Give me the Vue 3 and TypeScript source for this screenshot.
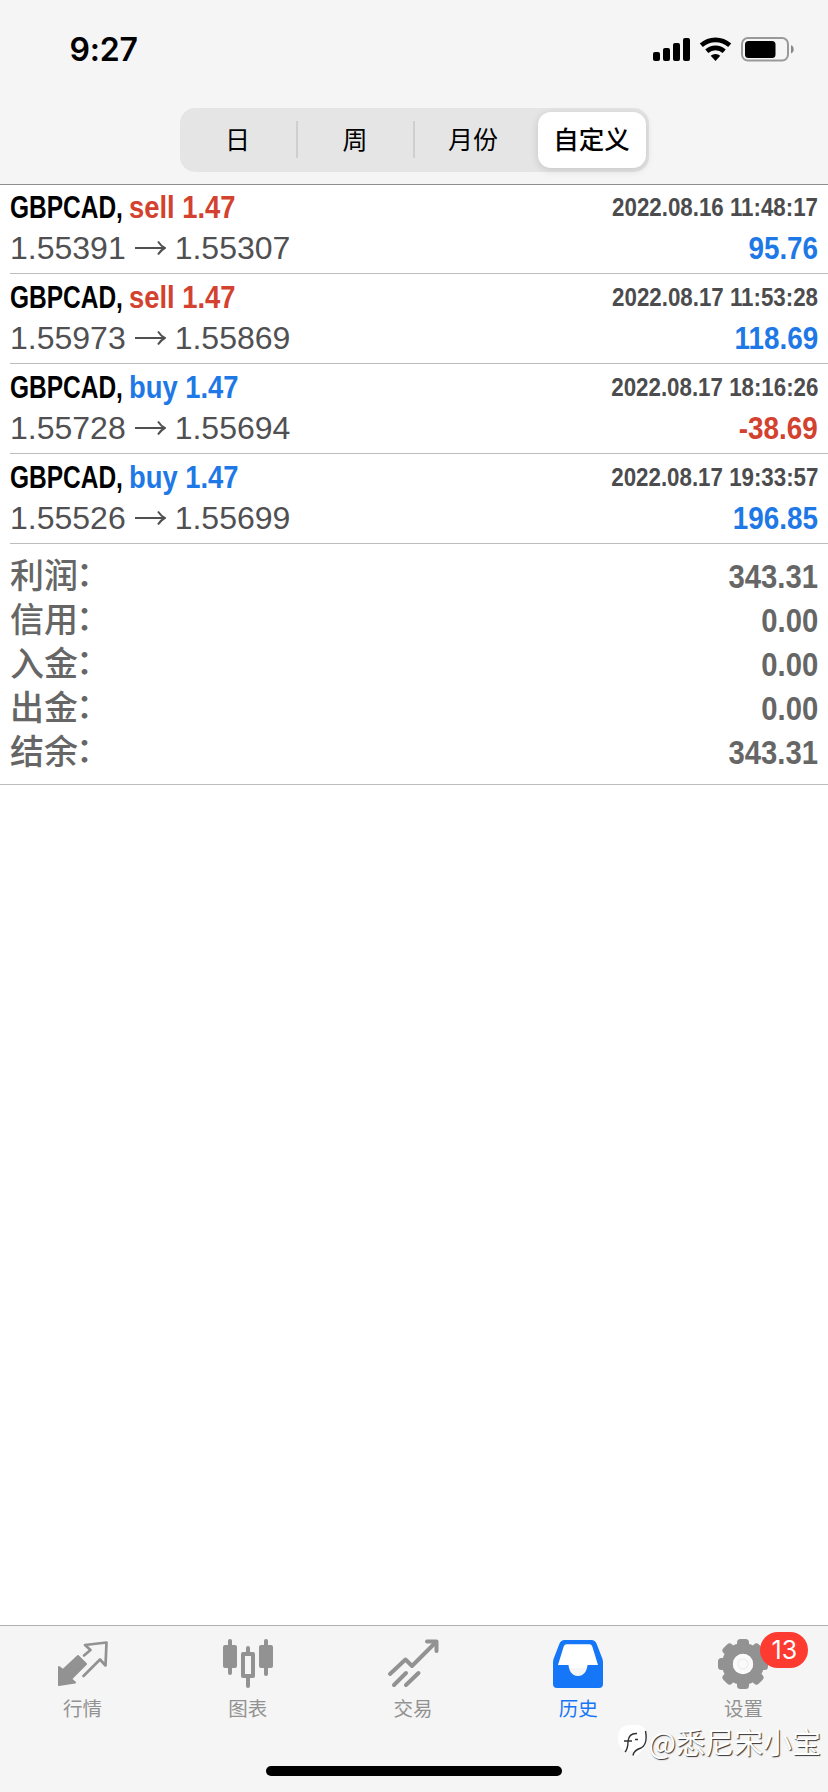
<script setup lang="ts">
type Side = 'buy' | 'sell'

interface Deal {
  symbol: string
  side: Side
  volume: string
  open: string
  close: string
  time: string
  profit: string
}

interface SummaryLine {
  label: string
  value: string
}

interface Tab {
  id: string
  label: string
  badge?: number
}

const ranges: string[] = ['日', '周', '月份', '自定义']
const activeRange = 3

const deals: Deal[] = [
  { symbol: 'GBPCAD', side: 'sell', volume: '1.47', open: '1.55391', close: '1.55307', time: '2022.08.16 11:48:17', profit: '95.76' },
  { symbol: 'GBPCAD', side: 'sell', volume: '1.47', open: '1.55973', close: '1.55869', time: '2022.08.17 11:53:28', profit: '118.69' },
  { symbol: 'GBPCAD', side: 'buy', volume: '1.47', open: '1.55728', close: '1.55694', time: '2022.08.17 18:16:26', profit: '-38.69' },
  { symbol: 'GBPCAD', side: 'buy', volume: '1.47', open: '1.55526', close: '1.55699', time: '2022.08.17 19:33:57', profit: '196.85' },
]

const summary: SummaryLine[] = [
  { label: '利润', value: '343.31' },
  { label: '信用', value: '0.00' },
  { label: '入金', value: '0.00' },
  { label: '出金', value: '0.00' },
  { label: '结余', value: '343.31' },
]

const tabs: Tab[] = [
  { id: 'quotes', label: '行情' },
  { id: 'charts', label: '图表' },
  { id: 'trade', label: '交易' },
  { id: 'history', label: '历史' },
  { id: 'settings', label: '设置', badge: 13 },
]
const activeTab = 'history'

const gearTeeth: number[] = Array.from({ length: 8 }, (_, i) => i * 45)
</script>

<template>
  <div class="screen">
    <header class="top">
      <div class="status">
        <span class="clock">9:27</span>
        <svg class="indicators" width="146" height="28" viewBox="0 0 146 28">
          <rect x="1" y="16" width="7" height="9" rx="2" />
          <rect x="11" y="12" width="7" height="13" rx="2" />
          <rect x="21" y="7" width="7" height="18" rx="2" />
          <rect x="31" y="2" width="7" height="23" rx="2" />
          <g fill="none" stroke="#000" stroke-width="4.6">
            <path d="M49.3 9.3a21.3 21.3 0 0 1 28.4 0" />
            <path d="M54.8 15.2a13 13 0 0 1 17.4 0" />
          </g>
          <path d="M58.7 19.8a7.2 7.2 0 0 1 9.6 0L63.5 25z" />
          <rect x="90" y="2" width="46" height="22.6" rx="6" fill="none" stroke="#999" stroke-width="2" />
          <rect x="93" y="5" width="30.5" height="17" rx="3.5" />
          <path d="M139 9.3c3.6 1 3.6 7.200 0 8.200z" fill="#888" />
        </svg>
      </div>
      <nav class="segments">
        <button
          v-for="(r, i) in ranges"
          :key="r"
          type="button"
          class="segment"
          :class="{ active: i === activeRange }"
        >{{ r }}</button>
      </nav>
    </header>

    <main class="content">
      <article v-for="d in deals" :key="d.time" class="deal">
        <div class="line first">
          <span class="title">
            <span class="symbol">{{ d.symbol }},</span>
            <span class="side" :class="d.side">{{ d.side }} {{ d.volume }}</span>
          </span>
          <span class="time">{{ d.time }}</span>
        </div>
        <div class="line second">
          <span class="prices">
            <span>{{ d.open }}</span>
            <svg class="arrow" width="31" height="16" viewBox="0 0 31 16">
              <path d="M0 8H29.500M23 1.500Q26 6 29.800 8Q26 10 23 14.500" />
            </svg>
            <span>{{ d.close }}</span>
          </span>
          <span class="profit" :class="{ loss: d.profit.startsWith('-') }">{{ d.profit }}</span>
        </div>
      </article>

      <section class="summary">
        <div v-for="s in summary" :key="s.label" class="sum">
          <span class="sum-label">{{ s.label }}<span class="colon">：</span></span>
          <span class="sum-value">{{ s.value }}</span>
        </div>
      </section>
    </main>

    <footer class="tabbar">
      <div class="tabs">
        <a v-for="t in tabs" :key="t.id" class="tab" :class="{ active: t.id === activeTab }">
          <span class="icon-box">
            <svg class="icon" width="52" height="52" viewBox="0 0 52 52">
              <template v-if="t.id === 'quotes'">
                <path fill="currentColor" stroke="currentColor" stroke-width="2" stroke-linejoin="round" d="M2 47V29L6 32L21 18L29 26L14 41L18 44.500Z" />
                <path fill="none" stroke="currentColor" stroke-width="2.700" stroke-linejoin="round" stroke-linecap="round" d="M27 17.500L33.500 12L28 7L49.500 4.500L48.500 27.500L43 21.500L26.500 38" />
              </template>
              <g v-else-if="t.id === 'charts'" fill="currentColor">
                <rect x="1" y="7" width="14" height="23" rx="2" />
                <rect x="6" y="1" width="4" height="36" rx="2" />
                <rect x="37" y="7" width="14" height="23" rx="2" />
                <rect x="42" y="1" width="4" height="37" rx="2" />
                <rect x="24" y="8" width="4" height="9" rx="2" />
                <rect x="24" y="38" width="4" height="12" rx="2" />
                <path fill-rule="evenodd" d="M21 14h10a2 2 0 0 1 2 2v22a2 2 0 0 1-2 2H21a2 2 0 0 1-2-2V16a2 2 0 0 1 2-2zm2 4v18h6V18z" />
              </g>
              <g v-else-if="t.id === 'trade'" fill="none" stroke="currentColor" stroke-width="4" stroke-linecap="round" stroke-linejoin="round">
                <path d="M3 36L18.500 21.500L25 28L49 4" />
                <path d="M40 3.500H49.500V13" />
                <path d="M7 47L19 35M19 47L31.500 35" />
              </g>
              <template v-else-if="t.id === 'history'">
                <path fill="#fff" d="M12 5H40L48 30H4Z" />
                <path fill="currentColor" fill-rule="evenodd" d="M12.500 2H39.500Q43 2 44.500 5.500L50.500 21Q51 23 51 25V46Q51 50 47 50H5Q1 50 1 46V25Q1 23 1.500 21L7.500 5.500Q9 2 12.500 2ZM14.500 6.300Q12.500 6.300 11.700 8.500L6 27H16.500C17 32 19.500 38 26 38S35 32 35.500 27H46L40.300 8.500Q39.500 6.300 37.500 6.300Z" />
              </template>
              <g v-else fill="currentColor">
                <rect v-for="a in gearTeeth" :key="a" x="20" y="1" width="12" height="12" rx="3.500" :transform="`rotate(${a} 26 26)`" />
                <circle cx="26" cy="26" r="15.500" fill="none" stroke="currentColor" stroke-width="11" />
                <circle cx="26" cy="26" r="10.200" fill="#fafafa" />
                <circle cx="26" cy="26" r="5" fill="none" stroke="#efefef" stroke-width="1.500" />
              </g>
            </svg>
            <span v-if="t.badge" class="badge">{{ t.badge }}</span>
          </span>
          <span class="tab-label">{{ t.label }}</span>
        </a>
      </div>
      <div class="home-bar"></div>
      <div class="watermark">
        <svg width="31" height="34" viewBox="0 0 31 34">
          <path d="M10 1H21Q30 2 30 14Q30 26 16 33L17 27H9Q1 25 1 14Q1 3 10 1Z" fill="#fff" />
          <path d="M28.500 7Q31 20 24 24Q17 26 16 31.500" fill="none" stroke="#333" stroke-width="1.400" />
          <path d="M8 28Q11 25 11 17M7 17H15M11 17Q12 9 20 9.500M18 15.500H21" fill="none" stroke="#333" stroke-width="1.400" />
        </svg>
        <span>@悉尼宋小宝</span>
      </div>
    </footer>
  </div>
</template>

<style>
body {
  margin: 0;
  background: #fff;
}
</style>

<style scoped>
.screen {
  width: 828px;
  height: 1792px;
  display: flex;
  flex-direction: column;
  overflow: hidden;
  background: #fff;
  font-family: "Liberation Sans", "Noto Sans CJK SC", sans-serif;
}

.top {
  box-sizing: border-box;
  height: 185px;
  flex: none;
  display: flex;
  flex-direction: column;
  align-items: center;
  background: #f5f5f5;
  border-bottom: 1px solid #8e8e8e;
}

.status {
  box-sizing: border-box;
  width: 100%;
  height: 108px;
  padding: 30px 30px 0 69.5px;
  display: flex;
  justify-content: space-between;
  align-items: flex-start;
}

.clock {
  font: 600 32px/40px Inter, sans-serif;
  letter-spacing: -0.2px;
}

.indicators {
  margin-top: 6px;
}

.segments {
  box-sizing: border-box;
  width: 469px;
  height: 64px;
  padding: 4px 3px;
  display: grid;
  grid-template-columns: 114px 117px 124px 108px;
  border-radius: 15px;
  background: #e5e5e5;
}

.segment {
  position: relative;
  padding: 0;
  border: 0;
  background: none;
  color: #000;
  font: 400 25px/56px "Liberation Sans", "Noto Sans CJK SC", sans-serif;
}

.segment:nth-child(1) {
  padding-right: 4px;
}

.segment:nth-child(3) {
  padding-right: 5px;
}

.segment:nth-child(-n + 2)::after {
  content: "";
  position: absolute;
  right: -1px;
  top: 9px;
  width: 2px;
  height: 37px;
  background: #cfcfcf;
}

.segment.active {
  border-radius: 13px;
  background: #fff;
  font-weight: 500;
  font-size: 25.5px;
  box-shadow: 0 2px 8px rgba(0, 0, 0, 0.14);
}

.content {
  flex: 1;
}

.deal {
  box-sizing: border-box;
  height: 90px;
  margin-left: 10px;
  padding: 3px 10px 0 0;
  border-bottom: 1px solid #bdbdbd;
}

.deal:first-child {
  height: 89px;
  padding-top: 2px;
}

.line {
  display: flex;
  justify-content: space-between;
  white-space: nowrap;
}

.first {
  height: 40px;
  line-height: 40px;
}

.second {
  height: 42px;
  line-height: 42px;
}

.title {
  display: flex;
  font-size: 32px;
  font-weight: 700;
}

.symbol {
  width: 119px;
  transform: scaleX(0.765);
  transform-origin: left;
}

.side {
  transform: scaleX(0.855);
  transform-origin: left;
}

.sell {
  color: #d3412f;
}

.buy {
  color: #1e78e6;
}

.time {
  color: #4c4c4e;
  font-size: 26px;
  font-weight: 700;
  transform: scaleX(0.858);
  transform-origin: right;
}

.prices {
  display: flex;
  align-items: center;
  color: #505052;
  font-size: 32px;
}

.arrow {
  margin: 0 9px;
  fill: none;
  stroke: #505052;
  stroke-width: 2;
}

.profit {
  color: #1e78e6;
  font-size: 32px;
  font-weight: 700;
  transform: scaleX(0.87);
  transform-origin: right;
}

.profit.loss {
  color: #d3412f;
}

.summary {
  padding: 10px 10px;
  border-bottom: 1px solid #bdbdbd;
}

.sum {
  height: 44px;
  display: flex;
  justify-content: space-between;
  color: #666;
  line-height: 44px;
}

.sum-label {
  font-size: 34px;
  font-weight: 500;
}

.colon {
  display: inline-block;
  transform: translate(-2px, -2px);
}

.sum-value {
  font-size: 34px;
  font-weight: 700;
  transform: scaleX(0.86);
  transform-origin: right;
}

.tabbar {
  position: relative;
  box-sizing: border-box;
  height: 167px;
  flex: none;
  display: flex;
  flex-direction: column;
  align-items: center;
  background: #f5f5f5;
  border-top: 1px solid #b0b0b0;
}

.tabs {
  width: 826px;
  margin-right: 2px;
  height: 140px;
  display: grid;
  grid-template-columns: repeat(5, 1fr);
}

.tab {
  display: flex;
  flex-direction: column;
  align-items: center;
  padding-top: 12px;
  color: #929292;
}

.tab.active {
  color: #1576f8;
}

.icon-box {
  position: relative;
  height: 56px;
}

.icon {
  display: block;
}

.badge {
  position: absolute;
  left: 43px;
  top: -6px;
  width: 48px;
  height: 36px;
  border-radius: 18px;
  background: #fd3b30;
  color: #fff;
  font: 400 25px/36px Inter, sans-serif;
  text-align: center;
}

.tab-label {
  font: 400 19.5px/31px "Liberation Sans", "Noto Sans CJK SC", sans-serif;
}

.home-bar {
  width: 296px;
  height: 10px;
  border-radius: 5px;
  background: #000;
}

.watermark {
  position: absolute;
  right: 7px;
  bottom: 31px;
  display: flex;
  align-items: center;
  gap: 1px;
  color: #fff;
  font: 400 29px/40px "Noto Sans CJK SC", sans-serif;
  text-shadow: 1px 1px 1px #333;
  white-space: nowrap;
}
</style>
